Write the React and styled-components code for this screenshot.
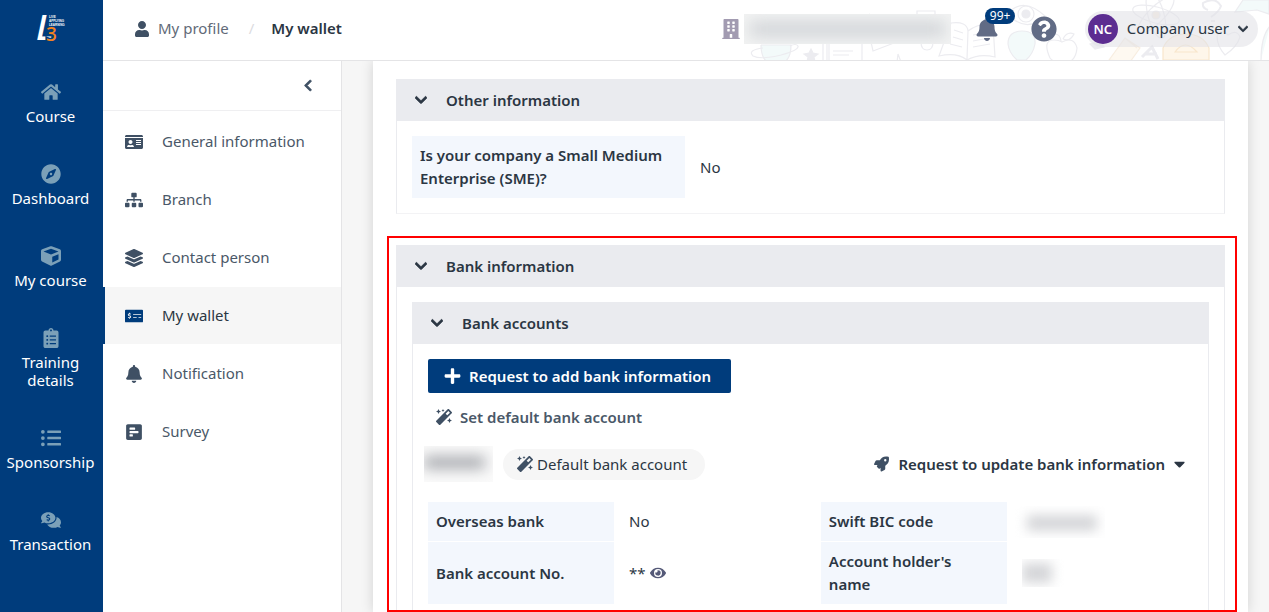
import React from "react";
import styled, { createGlobalStyle, css } from "styled-components";
import {
  FaHome,
  FaCompass,
  FaCube,
  FaClipboardList,
  FaListUl,
  FaCommentsDollar,
  FaUser,
  FaChevronLeft,
  FaChevronDown,
  FaIdCard,
  FaSitemap,
  FaLayerGroup,
  FaMoneyCheckAlt,
  FaBell,
  FaPollH,
  FaBuilding,
  FaQuestionCircle,
  FaPlus,
  FaMagic,
  FaRocket,
  FaCaretDown,
  FaEye,
} from "react-icons/fa";

const mainLinks = [
  { label: "Course", icon: FaHome },
  { label: "Dashboard", icon: FaCompass },
  { label: "My course", icon: FaCube },
  { label: "Training details", icon: FaClipboardList },
  { label: "Sponsorship", icon: FaListUl },
  { label: "Transaction", icon: FaCommentsDollar },
];

const profileLinks = [
  { label: "General information", icon: FaIdCard },
  { label: "Branch", icon: FaSitemap },
  { label: "Contact person", icon: FaLayerGroup },
  { label: "My wallet", icon: FaMoneyCheckAlt, active: true },
  { label: "Notification", icon: FaBell },
  { label: "Survey", icon: FaPollH },
];

const Logo = () => (
  <LogoSvg viewBox="0 0 30 30" role="img" aria-label="L3 logo">
    <text
      x="0"
      y="26"
      fontSize="35"
      fontWeight="600"
      fontStyle="italic"
      fontFamily="Open Sans, sans-serif"
      fill="#fff"
    >
      L
    </text>
    <text
      x="10"
      y="27"
      fontSize="19"
      fontWeight="500"
      fill="#f5821f"
      stroke="#003c7c"
      strokeWidth="3"
      paintOrder="stroke"
    >
      3
    </text>
    <g fontSize="3" fontWeight="700" fontFamily="Liberation Sans, sans-serif" fill="#fff">
      <text x="13" y="4">LIVE</text>
      <text x="13" y="8">APPLYING</text>
      <text x="13" y="12">LEARNING</text>
    </g>
  </LogoSvg>
);

const Doodles = () => (
  <DoodleSvg viewBox="0 0 520 60" aria-hidden="true">
    <g fill="none" stroke="#ececf0" strokeWidth="1.2">
      <path d="M12 45h30q0 14-8 18H20q-8-4-8-18" fill="#f3fafa" />
      <path d="M14 48q-16 2-10 8 8 4 28-1 18-5 17-9-2-3-8 0" />
      <path d="m62 49 2 4 5 1-4 3 1 5-4-3-4 3 1-5-4-3 5-1z" fill="#ececf0" />
      <path d="M74 62V38h4v24M80 62V40h33v22M84 51h20M84 55h16" />
      <path d="m122 42 20-5 3 6-21 8zM120 14l8 4M152 62l-3-8-1 8" />
      <path d="M168 15v-4h18v4M170 18h14v24q0 8-6 8t-6-8V30" />
      <path d="M202 23q16-2 17 8 12-9 25-6l2 32q-16-4-28 3-10-8-28-4zM219 31l-1 28M224 35l16-3M224 41l16-3M224 47l17-3M205 30l9 3M204 37l10 3M201 44l12 3" />
      <path d="M258 14q16-18 38 2-18 18-38-2z" />
      <circle cx="277" cy="14" r="8" />
      <circle cx="277" cy="14" r="4" fill="#ececf0" />
      <path d="M259 44q0-13 14-13t13 13q-2 10-9 16h-9q-8-7-9-16z" fill="#f3fafa" />
      <path d="M301 58q-8-18 4-18 5 0 8 2 12-6 15 6-1 11-8 14-5-3-10 0-6 0-9-4zM312 41q-1-7-6-7M314 39q4-8 11-5-4 8-11 5" />
      <path d="m341 44 9-3 5 6-9 2z" fill="#ececf0" />
      <path d="m360 60 16-22 15 10-10 14zM376 38l6 5 6 5" stroke="#f8eee1" fill="#fef9f1" />
      <circle cx="407" cy="15" r="4" fill="#f8eee1" />
      <ellipse cx="407" cy="15" rx="24" ry="8" transform="rotate(15 407 15)" />
      <ellipse cx="407" cy="15" rx="24" ry="8" transform="rotate(75 407 15)" />
      <ellipse cx="407" cy="15" rx="24" ry="8" transform="rotate(135 407 15)" />
      <path d="m393 57 10-10 6 12M396 54h12" strokeWidth="3" />
      <path d="M414 60V48q6-14 23-14t23 14v12zM426 52q10-14 22 0z" stroke="#f8e6cc" fill="#fef6ea" />
      <path d="M459 10q-6-2-5-7 12-7 18 3-2 6-10 11M462 21h4" strokeWidth="2" />
      <path d="M468 36q5-9 11-1 9-6 12 2-3 10-15 18-8-9-8-19" />
      <path d="m494 0-8 12 22-2 12 4V0zM521 26q-9 10-9 34" fill="#f3fafa" />
    </g>
  </DoodleSvg>
);

const Panel = ({ title, children, nested }) => (
  <PanelBox $nested={nested}>
    <PanelHeader type="button" aria-expanded="true">
      <FaChevronDown />
      {title}
    </PanelHeader>
    <PanelBody>{children}</PanelBody>
  </PanelBox>
);

const App = () => {
  return (
    <>
      <GlobalStyle />
      <Layout>
        <MainNav aria-label="Main">
          <Logo />
          {mainLinks.map(({ label, icon: Icon }) => (
            <MainLink href="#" key={label}>
              <Icon />
              {label}
            </MainLink>
          ))}
        </MainNav>
        <Page>
          <Header>
            <Doodles />
            <Breadcrumb aria-label="Breadcrumb">
              <CrumbLink href="#">
                <FaUser />
                My profile
              </CrumbLink>
              <Slash>/</Slash>
              <Current>My wallet</Current>
            </Breadcrumb>
            <HeaderTools>
              <Company>
                <FaBuilding />
                <HiddenName />
              </Company>
              <BellButton type="button" aria-label="Notifications">
                <FaBell />
                <Badge>99+</Badge>
              </BellButton>
              <HelpButton type="button" aria-label="Help">
                <FaQuestionCircle />
              </HelpButton>
              <UserButton type="button">
                <Avatar>NC</Avatar>
                Company user
                <FaChevronDown />
              </UserButton>
            </HeaderTools>
          </Header>
          <Columns>
            <SideNav aria-label="Profile">
              <Collapse type="button" aria-label="Collapse menu">
                <FaChevronLeft />
              </Collapse>
              {profileLinks.map(({ label, icon: Icon, active }) => (
                <SideLink href="#" key={label} $active={active}>
                  <Icon />
                  {label}
                </SideLink>
              ))}
            </SideNav>
            <Content>
              <Sheet>
                <Panel title="Other information">
                  <WideFields>
                    <Term>Is your company a Small Medium Enterprise (SME)?</Term>
                    <Value>No</Value>
                  </WideFields>
                </Panel>
                <Highlight>
                  <Panel title="Bank information">
                    <Panel title="Bank accounts" nested>
                      <AddButton type="button">
                        <FaPlus />
                        Request to add bank information
                      </AddButton>
                      <DefaultButton type="button">
                        <FaMagic />
                        Set default bank account
                      </DefaultButton>
                      <AccountRow>
                        <HiddenAccount />
                        <Tag>
                          <FaMagic />
                          Default bank account
                        </Tag>
                        <UpdateButton type="button">
                          <FaRocket />
                          Request to update bank information
                          <FaCaretDown />
                        </UpdateButton>
                      </AccountRow>
                      <Fields>
                        <Term>Overseas bank</Term>
                        <Value>No</Value>
                        <Term>Swift BIC code</Term>
                        <Value>
                          <HiddenCode />
                        </Value>
                        <Term>Bank account No.</Term>
                        <Value>
                          **
                          <EyeButton type="button" aria-label="Show account number">
                            <FaEye />
                          </EyeButton>
                        </Value>
                        <Term>Account holder's name</Term>
                        <Value>
                          <HiddenHolder />
                        </Value>
                      </Fields>
                    </Panel>
                  </Panel>
                </Highlight>
              </Sheet>
            </Content>
          </Columns>
        </Page>
      </Layout>
    </>
  );
};

const GlobalStyle = createGlobalStyle`
  * {
    box-sizing: border-box;
  }
  body {
    margin: 0;
    overflow: hidden;
    color: #2b3643;
    background: #fff;
    font: 15px/23px "Noto Sans", "Open Sans", sans-serif;
  }
  button {
    border: 0;
    padding: 0;
    color: inherit;
    background: none;
    font: inherit;
    cursor: pointer;
  }
  a {
    color: inherit;
    text-decoration: none;
  }
  svg {
    flex-shrink: 0;
  }
`;

const Layout = styled.div`
  display: flex;
  height: 100vh;
`;

const MainNav = styled.nav`
  flex: 0 0 103px;
  display: flex;
  flex-direction: column;
  align-items: center;
  padding: 14px 2px 0 0;
  color: #fff;
  background: #003c7c;
`;

const LogoSvg = styled.svg`
  width: 30px;
  height: 30px;
  margin-bottom: 38px;
  overflow: visible;
`;

const MainLink = styled.a`
  display: flex;
  flex-direction: column;
  align-items: center;
  width: 100%;
  margin-bottom: 39px;
  padding: 0 4px;
  line-height: 18px;
  text-align: center;

  svg {
    width: 20px;
    height: 20px;
    margin-bottom: 5px;
    color: #7ba0b8;
  }
`;

const Page = styled.div`
  flex: 1;
  min-width: 0;
  display: flex;
  flex-direction: column;
`;

const Header = styled.header`
  position: relative;
  flex: 0 0 61px;
  display: flex;
  align-items: center;
  justify-content: space-between;
  padding: 0 11px 3px 32px;
  border-bottom: 1px solid #e4e4e6;
`;

const DoodleSvg = styled.svg`
  position: absolute;
  top: 0;
  right: 0;
  width: 520px;
  height: 60px;
`;

const Breadcrumb = styled.nav`
  display: flex;
  align-items: center;
`;

const CrumbLink = styled.a`
  display: flex;
  align-items: center;
  gap: 9px;
  color: #626a78;

  svg {
    width: 14px;
    height: 16px;
    color: #3f5064;
  }
`;

const Slash = styled.span`
  margin: 0 17px 0 20px;
  color: #dcdcdf;
`;

const Current = styled.span`
  font-weight: 600;
`;

const HeaderTools = styled.div`
  position: relative;
  display: flex;
  align-items: center;
`;

const Company = styled.div`
  display: flex;
  align-items: center;
  gap: 4px;
  margin-right: 24px;

  svg {
    width: 18px;
    height: 20px;
    color: #a29bb1;
  }
`;

const Hidden = styled.span`
  display: block;
  overflow: hidden;

  &::before {
    content: "";
    display: block;
    height: 100%;
    background: #a9abb0;
  }
`;

const HiddenName = styled(Hidden)`
  width: 207px;
  height: 30px;
  padding: 8px 6px;
  background: #f2f3f3;

  &::before {
    background: #ced1d5;
    filter: blur(8px);
  }
`;

const HiddenAccount = styled(Hidden)`
  width: 69px;
  height: 36px;
  margin-left: -4px;
  padding: 10px 8px 13px 0;
  background: #fafafa;

  &::before {
    filter: blur(7px);
  }
`;

const HiddenCode = styled(Hidden)`
  width: 92px;
  height: 32px;
  margin-left: -9px;
  padding: 9px 8px 7px 14px;

  &::before {
    background: #d5d6d9;
    filter: blur(6px);
  }
`;

const HiddenHolder = styled(Hidden)`
  width: 42px;
  height: 28px;
  padding: 4px 12px 4px 0;

  &::before {
    background: #d5d6d9;
    filter: blur(6px);
  }
`;

const BellButton = styled.button`
  position: relative;
  display: flex;
  margin-right: 32px;
  color: #616b85;

  svg {
    width: 24px;
    height: 24px;
  }
`;

const Badge = styled.span`
  position: absolute;
  top: -9px;
  left: 10px;
  padding: 0 5px;
  border-radius: 8px;
  color: #fff;
  background: #003c7c;
  font-size: 12px;
  line-height: 16px;
`;

const HelpButton = styled.button`
  display: flex;
  margin-right: 28px;
  color: #616b85;

  svg {
    width: 26px;
    height: 26px;
  }
`;

const UserButton = styled.button`
  display: flex;
  align-items: center;
  gap: 9px;
  height: 36px;
  padding: 0 10px 0 3px;
  border-radius: 18px;
  background: rgba(226, 226, 231, 0.6);

  svg {
    width: 10px;
    height: 12px;
    stroke: currentColor;
    stroke-width: 30px;
  }
`;

const Avatar = styled.span`
  width: 30px;
  height: 30px;
  border-radius: 50%;
  color: #fff;
  background: #5c2d91;
  font-size: 13px;
  font-weight: 600;
  line-height: 30px;
  text-align: center;
`;

const Columns = styled.div`
  flex: 1;
  min-height: 0;
  display: flex;
`;

const SideNav = styled.nav`
  flex: 0 0 239px;
  border-right: 1px solid #e4e4e6;
`;

const Collapse = styled.button`
  display: flex;
  align-items: center;
  justify-content: flex-end;
  width: 100%;
  height: 50px;
  margin-bottom: 2px;
  padding-right: 28px;
  border-bottom: 1px solid #efeff1;
  color: #3f5064;

  svg {
    width: 10px;
    height: 13px;
    stroke: currentColor;
    stroke-width: 30px;
  }
`;

const SideLink = styled.a`
  display: flex;
  align-items: center;
  gap: 19px;
  height: 57px;
  margin-bottom: 1px;
  padding-left: 20px;
  border-left: 2px solid transparent;
  color: #4a5868;

  svg {
    width: 18px;
    height: 18px;
    color: #3f5064;
  }

  ${({ $active }) =>
    $active &&
    css`
      border-left-color: #003c7c;
      color: #2b3643;
      background: #f6f6f6;

      svg {
        color: #003c7c;
      }
    `}
`;

const Content = styled.main`
  flex: 1;
  min-width: 0;
  padding: 0 21px 0 31px;
  overflow: hidden;
  background: #f6f6f6;
`;

const Sheet = styled.div`
  min-height: 100%;
  padding: 18px 23px 0;
  background: #fff;
  box-shadow: 0 0 12px rgba(0, 0, 0, 0.15);
`;

const PanelBox = styled.section`
  border: 1px solid #eaebef;
  border-top: 0;
  border-bottom-color: ${({ $nested }) => ($nested ? "transparent" : "#f3f3f5")};
`;

const PanelHeader = styled.button`
  display: flex;
  align-items: center;
  gap: 19px;
  width: 100%;
  height: 42px;
  padding-left: 18px;
  background: #eaebef;
  font-weight: 600;

  svg {
    width: 12px;
    height: 14px;
    stroke: currentColor;
    stroke-width: 30px;
  }
`;

const PanelBody = styled.div`
  padding: 15px;
`;

const Highlight = styled.div`
  height: 376px;
  margin: 22px -12px 0 -9px;
  padding: 7px 10px 0 7px;
  border: 2px solid #ff0000;
  overflow: hidden;
`;

const WideFields = styled.dl`
  display: grid;
  grid-template-columns: 273px 1fr;
  margin: 0;
`;

const Fields = styled.dl`
  display: grid;
  grid-template-columns: 186px 10fr 186px 9fr;
  row-gap: 1px;
  margin: 20px 0 0;
`;

const Term = styled.dt`
  display: flex;
  align-items: center;
  padding: 8px 20px 8px 8px;
  background: #f3f7fd;
  font-weight: 600;
`;

const Value = styled.dd`
  display: flex;
  align-items: center;
  margin: 0;
  padding-left: 15px;
`;

const EyeButton = styled.button`
  display: flex;
  margin-left: 4px;
  color: #555a78;

  svg {
    width: 16px;
    height: 16px;
  }
`;

const AddButton = styled.button`
  display: flex;
  align-items: center;
  gap: 8px;
  height: 34px;
  padding: 0 20px 0 16px;
  border-radius: 2px;
  color: #fff;
  background: #003c7c;
  font-weight: 600;

  svg {
    width: 17px;
    height: 18px;
  }
`;

const DefaultButton = styled.button`
  display: flex;
  align-items: center;
  gap: 8px;
  height: 48px;
  padding-left: 8px;
  color: #4a5868;
  font-weight: 600;

  svg {
    width: 16px;
    height: 16px;
    color: #3f5064;
  }
`;

const AccountRow = styled.div`
  display: flex;
  align-items: center;
  gap: 10px;
  margin-top: 5px;
`;

const Tag = styled.span`
  display: flex;
  align-items: center;
  gap: 4px;
  height: 31px;
  padding: 0 18px 0 14px;
  border-radius: 16px;
  background: #f6f6f6;

  svg {
    width: 16px;
    height: 16px;
    color: #3f5064;
  }
`;

const UpdateButton = styled.button`
  display: flex;
  align-items: center;
  gap: 9px;
  margin-left: auto;
  padding-right: 8px;
  font-weight: 600;

  svg {
    width: 15px;
    height: 16px;
    color: #3f5064;
  }

  svg:last-child {
    width: 11px;
    height: 18px;
    color: inherit;
  }
`;

export default App;
